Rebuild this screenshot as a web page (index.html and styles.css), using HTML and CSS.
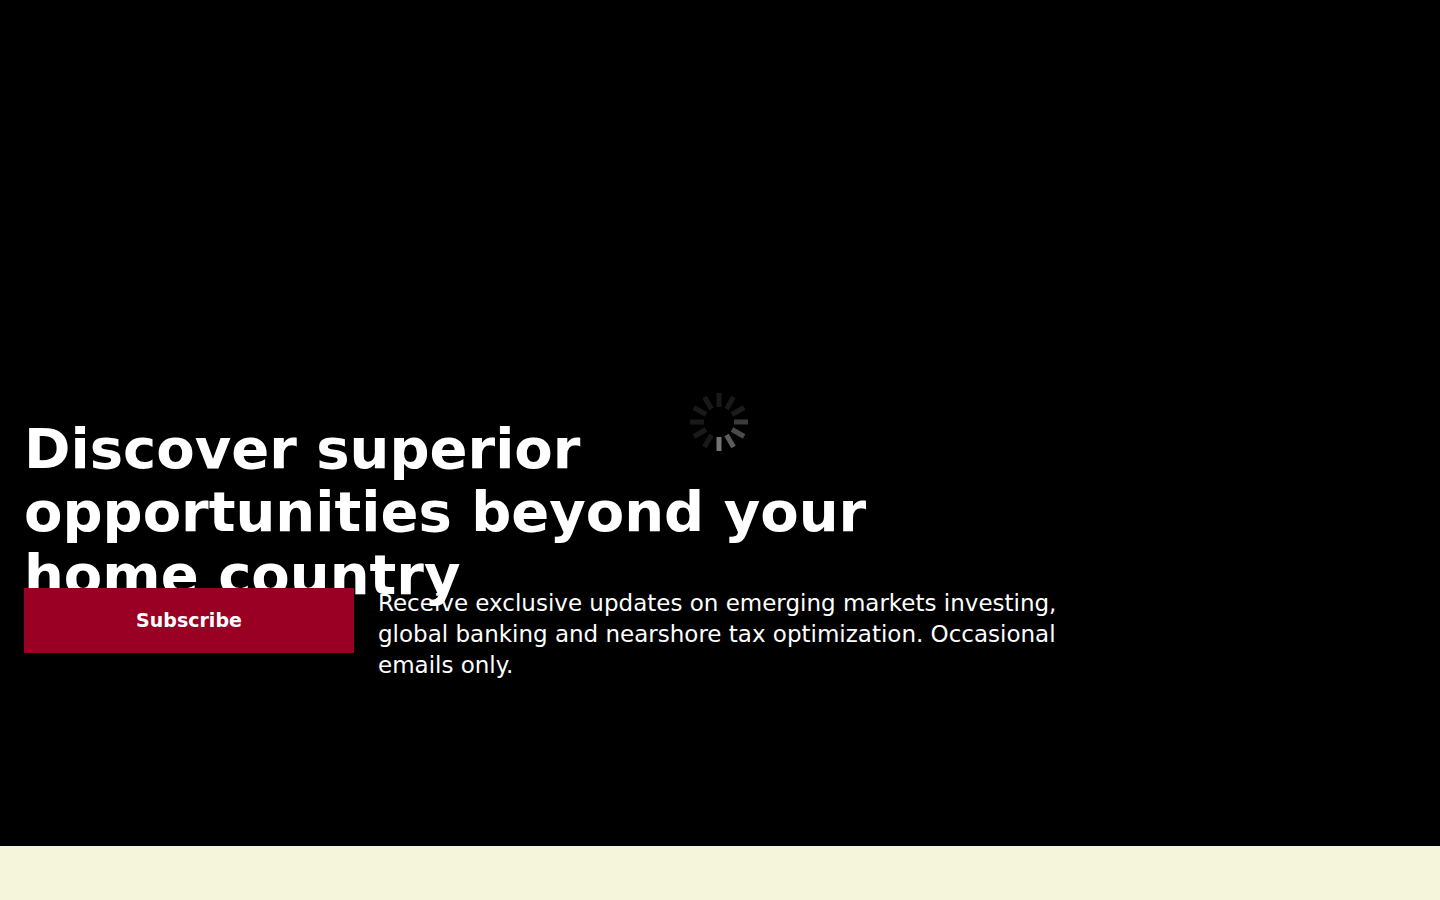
FILE: index.html
```html
<!DOCTYPE html>
<html lang="en">
<head>
    <meta charset="UTF-8">
    <meta name="viewport" content="width=device-width, initial-scale=1.0">
    <title>Discover superior opportunities</title>
    <link rel="stylesheet" href="styles.css">
</head>
<body>
    <!-- Hero Section -->
    <section class="hero">
        <svg class="spinner" viewBox="-29 -29 60 60" aria-hidden="true">
            <g stroke-width="5" stroke-linecap="butt">
                <path stroke="#191919" d="M0-15V-29"/>
                <path stroke="#191919" d="M0-15V-29" transform="rotate(30)"/>
                <path stroke="#1b1b1b" d="M0-15V-29" transform="rotate(60)"/>
                <path stroke="#3b3b3b" d="M0-15V-29" transform="rotate(90)"/>
                <path stroke="#4a4a4a" d="M0-15V-29" transform="rotate(120)"/>
                <path stroke="#5c5c5c" d="M0-15V-29" transform="rotate(150)"/>
                <path stroke="#737373" d="M0-15V-29" transform="rotate(180)"/>
                <path stroke="#191919" d="M0-15V-29" transform="rotate(210)"/>
                <path stroke="#191919" d="M0-15V-29" transform="rotate(240)"/>
                <path stroke="#191919" d="M0-15V-29" transform="rotate(270)"/>
                <path stroke="#191919" d="M0-15V-29" transform="rotate(300)"/>
                <path stroke="#191919" d="M0-15V-29" transform="rotate(330)"/>
            </g>
        </svg>
        <div class="hero-content">
            <h1>Discover superior opportunities beyond your home country</h1>
            <button class="subscribe" type="button">Subscribe</button>
            <p>Receive exclusive updates on emerging markets investing, global banking and nearshore tax optimization. Occasional emails only.</p>
        </div>
    </section>
</body>
</html>
```
FILE: styles.css
```css
body {
    margin: 0;
    font-family: 'DejaVu Sans', sans-serif;
    color: white;
    background-color: #f5f5dc;
}

.hero {
    position: relative;
    display: flex;
    align-items: flex-end;
    box-sizing: border-box;
    min-height: 94vh;
    padding: 24px 24px 165px;
    background-color: black;
}

/* Loading indicator, over the middle of the hero */
.spinner {
    position: absolute;
    top: 50%;
    left: 50%;
    width: 60px;
    height: 60px;
    transform: translate(-50%, -50%);
}

.hero-content {
    position: relative;
    flex: 1;
    display: grid;
    grid-template-columns: repeat(4, 1fr);
    column-gap: 24px;
    align-items: start;
}

/* The last line runs under the button */
h1 {
    grid-column: 1 / -1;
    max-width: 960px;
    margin: 0 0 -18px;
    font-size: 56px;
    line-height: 63px;
}

.subscribe {
    padding: 20px;
    border: none;
    background-color: #990024;
    color: white;
    font-family: inherit;
    font-size: 19px;
    font-weight: bold;
    line-height: 25px;
    cursor: pointer;
}

.subscribe:hover {
    background-color: #b3002a;
}

.hero-content p {
    grid-column: 2 / span 2;
    margin: 0;
    font-size: 23px;
    line-height: 31px;
}
```
